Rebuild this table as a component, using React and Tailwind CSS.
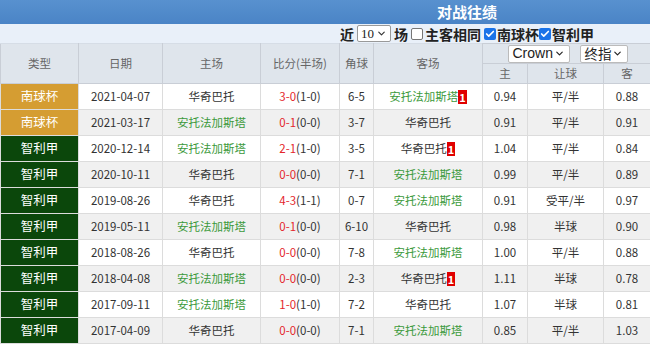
import React from 'react';
import { ChevronDown, Check } from 'lucide-react';

const HOME = '华奇巴托';
const AWAY = '安托法加斯塔';

const rows = [
  { type: '南球杯', date: '2021-04-07', home: HOME, score: '3-0', half: '(1-0)', corner: '6-5', away: AWAY, awayCard: true, h: '0.94', line: '平/半', a: '0.88' },
  { type: '南球杯', date: '2021-03-17', home: AWAY, score: '0-1', half: '(0-0)', corner: '3-7', away: HOME, h: '0.91', line: '平/半', a: '0.91' },
  { type: '智利甲', date: '2020-12-14', home: AWAY, score: '2-1', half: '(1-0)', corner: '3-5', away: HOME, awayCard: true, h: '1.04', line: '平/半', a: '0.84' },
  { type: '智利甲', date: '2020-10-11', home: HOME, score: '0-0', half: '(0-0)', corner: '7-1', away: AWAY, h: '0.99', line: '平/半', a: '0.89' },
  { type: '智利甲', date: '2019-08-26', home: HOME, score: '4-3', half: '(1-1)', corner: '0-7', away: AWAY, h: '0.91', line: '受平/半', a: '0.97' },
  { type: '智利甲', date: '2019-05-11', home: AWAY, score: '0-1', half: '(0-0)', corner: '6-10', away: HOME, h: '0.98', line: '半球', a: '0.90' },
  { type: '智利甲', date: '2018-08-26', home: HOME, score: '0-0', half: '(0-0)', corner: '7-8', away: AWAY, h: '1.00', line: '平/半', a: '0.88' },
  { type: '智利甲', date: '2018-04-08', home: AWAY, score: '0-0', half: '(0-0)', corner: '2-3', away: HOME, awayCard: true, h: '1.11', line: '半球', a: '0.78' },
  { type: '智利甲', date: '2017-09-11', home: AWAY, score: '1-0', half: '(1-0)', corner: '7-2', away: HOME, h: '1.07', line: '半球', a: '0.81' },
  { type: '智利甲', date: '2017-04-09', home: HOME, score: '0-0', half: '(0-0)', corner: '7-1', away: AWAY, h: '0.85', line: '平/半', a: '1.03' },
];

function Team({ name, card }) {
  return (
    <span className={name === AWAY ? 'text-[#3c9a3c]' : 'text-[#333]'}>
      {name}
      {card && (
        <span className="inline-block bg-[#e00000] text-white font-bold text-[11px] leading-[14px] px-[1px] align-[-1px]">1</span>
      )}
    </span>
  );
}

function Box({ checked }) {
  return checked ? (
    <span className="inline-flex w-[12px] h-[12px] rounded-[2px] bg-[#1a73e8] items-center justify-center mr-[1px] align-[-1px]">
      <Check size={10} strokeWidth={4} className="text-white" />
    </span>
  ) : (
    <span className="inline-block w-[12px] h-[12px] rounded-[2px] border border-[#767676] bg-white mr-[2px] align-[-1px]" />
  );
}

export default function App() {
  return (
    <div className="w-[650px] h-[347px] bg-white overflow-hidden font-['Noto_Sans_CJK_SC',sans-serif]">
      {/* Title */}
      <div className="h-[24px] bg-gradient-to-b from-[#5891cf] to-[#4a84c6] text-white font-bold text-[15px] leading-[24px] pl-[437px]">
        对战往绩
      </div>

      {/* Filters */}
      <div className="h-[19px] bg-[#e9f0f9] flex items-center justify-end pr-[56px] text-[14px] font-bold text-[#222] leading-none">
        <span>近</span>
        <span className="mx-[3px] inline-flex items-center h-[17px] w-[34px] border border-[#999] bg-white rounded-[2px] px-[3px] font-['Liberation_Serif',serif] font-normal text-[13px] justify-between">
          10
          <ChevronDown size={11} strokeWidth={2.5} className="text-[#333]" />
        </span>
        <span className="mr-[3px]">场</span>
        <Box />
        <span className="mr-[3px]">主客相同</span>
        <Box checked />
        <span>南球杯</span>
        <Box checked />
        <span>智利甲</span>
      </div>

      <table className="w-[650px] table-fixed border-collapse text-[11.5px] text-[#333] text-center">
        <colgroup>
          <col className="w-[78px]" />
          <col className="w-[84px]" />
          <col className="w-[98px]" />
          <col className="w-[79px]" />
          <col className="w-[34px]" />
          <col className="w-[109px]" />
          <col className="w-[45px]" />
          <col className="w-[76px]" />
          <col className="w-[47px]" />
        </colgroup>
        <thead>
          <tr className="h-[20px] bg-[#dfe5ec] text-[#666]">
            {['类型', '日期', '主场', '比分(半场)', '角球', '客场'].map((h) => (
              <th key={h} rowSpan={2} className="font-normal border border-[#c9ced6] border-t-[#d6dde6]">{h}</th>
            ))}
            <th colSpan={3} className="font-normal border border-[#c9ced6] p-0">
              <div className="flex items-center justify-center gap-[10px] pl-[2px]">
                <span className="inline-flex items-center justify-between w-[62px] h-[18px] bg-white border border-[#bbb] rounded-[2px] px-[4px] text-[14px] text-[#222] font-['Liberation_Sans',sans-serif]">
                  Crown
                  <ChevronDown size={11} strokeWidth={2.5} />
                </span>
                <span className="inline-flex items-center justify-between w-[48px] h-[18px] bg-white border border-[#bbb] rounded-[2px] px-[4px] text-[13.5px] text-[#222]">
                  终指
                  <ChevronDown size={11} strokeWidth={2.5} />
                </span>
              </div>
            </th>
          </tr>
          <tr className="h-[20px] bg-[#dfe5ec] text-[#666]">
            <th className="font-normal border border-[#c9ced6]">主</th>
            <th className="font-normal border border-[#c9ced6]">让球</th>
            <th className="font-normal border border-[#c9ced6]">客</th>
          </tr>
        </thead>
        <tbody>
          {rows.map((r, i) => (
            <tr key={r.date} className={`h-[26px] ${i % 2 === 1 ? 'bg-[#f0f0f0]' : 'bg-white'}`}>
              <td className={`border border-[#dcdcdc] text-white text-[12.5px] ${r.type === '南球杯' ? 'bg-[#d59d32]' : 'bg-[#0b470b]'}`}>{r.type}</td>
              <td className="border border-[#dcdcdc]">{r.date}</td>
              <td className="border border-[#dcdcdc]"><Team name={r.home} /></td>
              <td className="border border-[#dcdcdc]">
                <span className="text-[#e4262b]">{r.score}</span>{r.half}
              </td>
              <td className="border border-[#dcdcdc]">{r.corner}</td>
              <td className="border border-[#dcdcdc]"><Team name={r.away} card={r.awayCard} /></td>
              <td className="border border-[#dcdcdc]">{r.h}</td>
              <td className="border border-[#dcdcdc]">{r.line}</td>
              <td className="border border-[#dcdcdc]">{r.a}</td>
            </tr>
          ))}
        </tbody>
      </table>
    </div>
  );
}
